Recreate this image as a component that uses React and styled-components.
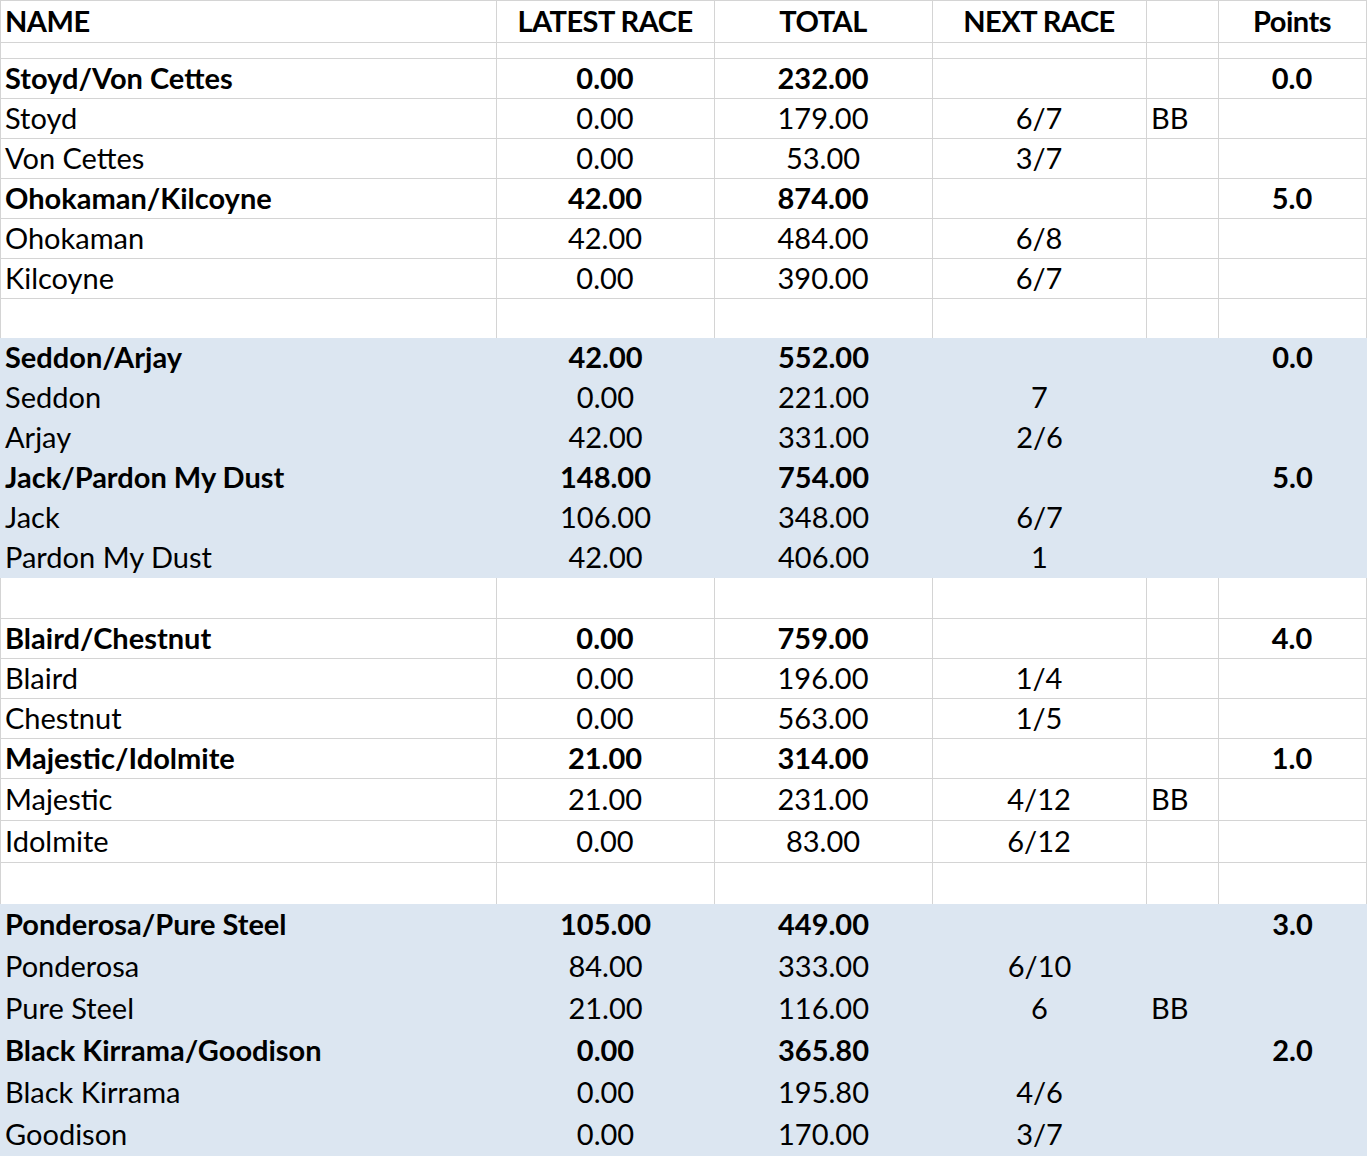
import React from 'react'
import styled, { createGlobalStyle } from 'styled-components'

const GlobalStyle = createGlobalStyle`
  html, body {
    margin: 0;
    padding: 0;
    background: #ffffff;
  }
  body {
    font-family: Lato, "Open Sans", sans-serif;
    color: #000;
  }
`

const COLS = '496px 218px 218px 214px 72px 148px'
const GRID = '#d4d4d4'
const SHADE = '#dce6f1'

const data = [
  { type: 'head' },
  { type: 'gap', h: 16, line: true },
  { bold: true, h: 40, v: ['Stoyd/Von Cettes', '0.00', '232.00', '', '', '0.0'] },
  { h: 40, v: ['Stoyd', '0.00', '179.00', '6/7', 'BB', ''] },
  { h: 40, v: ['Von Cettes', '0.00', '53.00', '3/7', '', ''] },
  { bold: true, h: 40, v: ['Ohokaman/Kilcoyne', '42.00', '874.00', '', '', '5.0'] },
  { h: 40, v: ['Ohokaman', '42.00', '484.00', '6/8', '', ''] },
  { h: 40, v: ['Kilcoyne', '0.00', '390.00', '6/7', '', ''] },
  { type: 'gap', h: 39, line: false },
  { shade: true, bold: true, h: 40, v: ['Seddon/Arjay', '42.00', '552.00', '', '', '0.0'] },
  { shade: true, h: 40, v: ['Seddon', '0.00', '221.00', '7', '', ''] },
  { shade: true, h: 40, v: ['Arjay', '42.00', '331.00', '2/6', '', ''] },
  { shade: true, bold: true, h: 40, v: ['Jack/Pardon My Dust', '148.00', '754.00', '', '', '5.0'] },
  { shade: true, h: 40, v: ['Jack', '106.00', '348.00', '6/7', '', ''] },
  { shade: true, h: 40, v: ['Pardon My Dust', '42.00', '406.00', '1', '', ''] },
  { type: 'gap', h: 41, line: true },
  { bold: true, h: 40, v: ['Blaird/Chestnut', '0.00', '759.00', '', '', '4.0'] },
  { h: 40, v: ['Blaird', '0.00', '196.00', '1/4', '', ''] },
  { h: 40, v: ['Chestnut', '0.00', '563.00', '1/5', '', ''] },
  { bold: true, h: 40, v: ['Majestic/Idolmite', '21.00', '314.00', '', '', '1.0'] },
  { h: 42, v: ['Majestic', '21.00', '231.00', '4/12', 'BB', ''] },
  { h: 42, v: ['Idolmite', '0.00', '83.00', '6/12', '', ''] },
  { type: 'gap', h: 41, line: false },
  { shade: true, bold: true, h: 42, v: ['Ponderosa/Pure Steel', '105.00', '449.00', '', '', '3.0'] },
  { shade: true, h: 42, v: ['Ponderosa', '84.00', '333.00', '6/10', '', ''] },
  { shade: true, h: 42, v: ['Pure Steel', '21.00', '116.00', '6', 'BB', ''] },
  { shade: true, bold: true, h: 42, v: ['Black Kirrama/Goodison', '0.00', '365.80', '', '', '2.0'] },
  { shade: true, h: 42, v: ['Black Kirrama', '0.00', '195.80', '4/6', '', ''] },
  { shade: true, h: 42, v: ['Goodison', '0.00', '170.00', '3/7', '', ''] },
]

const headers = ['NAME', 'LATEST RACE', 'TOTAL', 'NEXT RACE', '', 'Points']
const aligns = ['left', 'center', 'center', 'center', 'left', 'center']

const App = () => {
  return (
    <>
      <GlobalStyle />
      <Sheet>
        {data.map((row, i) => {
          if (row.type === 'head') {
            return (
              <Row key={i} h={42}>
                {headers.map((t, j) => (
                  <HeadCell key={j} align={aligns[j]} bold line>{t}</HeadCell>
                ))}
              </Row>
            )
          }
          if (row.type === 'gap') {
            return (
              <Row key={i} h={row.h}>
                {aligns.map((a, j) => (
                  <Cell key={j} align={a} line={row.line} />
                ))}
              </Row>
            )
          }
          return (
            <Row key={i} h={row.h} shade={row.shade ? 1 : 0}>
              {row.v.map((t, j) => (
                <Cell key={j} align={aligns[j]} bold={row.bold} line={!row.shade} shaded={row.shade}>{t}</Cell>
              ))}
            </Row>
          )
        })}
      </Sheet>
    </>
  )
}

export default App

const Sheet = styled.div`
width: 1367px;
border-top: 1px solid ${GRID};
border-left: 1px solid ${GRID};
box-sizing: border-box;
display: flex;
flex-direction: column;
`
const Row = styled.div`
display: grid;
grid-template-columns: ${COLS};
height: ${props => props.h}px;
background: ${props => props.shade ? SHADE : '#fff'};
margin-left: ${props => props.shade ? '-1px' : '0'};
padding-left: ${props => props.shade ? '1px' : '0'};
`
const Cell = styled.div`
box-sizing: border-box;
display: flex;
align-items: center;
justify-content: ${props => props.align === 'center' ? 'center' : 'flex-start'};
padding: 0 5px 3px 4px;
border-right: ${props => props.shaded ? 'none' : `1px solid ${GRID}`};
border-bottom: ${props => props.line ? `1px solid ${GRID}` : 'none'};
font-size: 29px;
font-weight: ${props => props.bold ? 700 : 400};
white-space: nowrap;
overflow: hidden;
line-height: 1;
`
const HeadCell = styled(Cell)`
letter-spacing: -0.5px;
`
